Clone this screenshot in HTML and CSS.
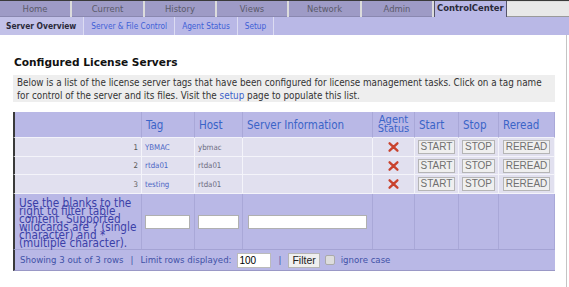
FILE: index.html
```html
<!DOCTYPE html>
<html>
<head>
<meta charset="utf-8">
<link rel="stylesheet" href="styles.css">
</head>
<body>
<div class="tabs">
  <div class="tab">Home</div>
  <div class="tab wide">Current</div>
  <div class="tab">History</div>
  <div class="tab">Views</div>
  <div class="tab wide">Network</div>
  <div class="tab">Admin</div>
  <div class="tab active">ControlCenter</div>
  <div class="tab-rest"></div>
</div>
<div class="subnav">
  <span class="sub current">Server Overview</span>
  <a class="sub">Server &amp; File Control</a>
  <a class="sub">Agent Status</a>
  <a class="sub">Setup</a>
</div>
<div class="main">
  <h1 class="title">Configured License Servers</h1>
  <div class="intro">Below is a list of the license server tags that have been configured for license management tasks. Click on a tag name for control of the server and its files. Visit the <a class="link">setup</a> page to populate this list.</div>
  <table class="grid">
    <thead>
      <tr class="head">
        <th class="c-num"></th>
        <th class="c-tag">Tag</th>
        <th class="c-host">Host</th>
        <th class="c-info">Server Information</th>
        <th class="c-agent"><span class="agent">Agent<br>Status</span></th>
        <th class="c-start">Start</th>
        <th class="c-stop">Stop</th>
        <th class="c-reread">Reread</th>
      </tr>
    </thead>
    <tbody>
      <tr class="row">
        <td class="num">1</td><td><a class="tag">YBMAC</a></td><td class="host">ybmac</td><td></td>
        <td class="ctr"><svg class="x" width="11" height="10" viewBox="0 0 11 10"><path d="M1.6 1.3 L9.4 8.7 M9.4 1.3 L1.6 8.7" stroke="#c9432e" stroke-width="2.3" stroke-linecap="round"/></svg></td>
        <td class="ctr"><button class="btn">START</button></td><td class="ctr"><button class="btn">STOP</button></td><td class="ctr"><button class="btn">REREAD</button></td>
      </tr>
      <tr class="row">
        <td class="num">2</td><td><a class="tag">rtda01</a></td><td class="host">rtda01</td><td></td>
        <td class="ctr"><svg class="x" width="11" height="10" viewBox="0 0 11 10"><path d="M1.6 1.3 L9.4 8.7 M9.4 1.3 L1.6 8.7" stroke="#c9432e" stroke-width="2.3" stroke-linecap="round"/></svg></td>
        <td class="ctr"><button class="btn">START</button></td><td class="ctr"><button class="btn">STOP</button></td><td class="ctr"><button class="btn">REREAD</button></td>
      </tr>
      <tr class="row">
        <td class="num">3</td><td><a class="tag">testing</a></td><td class="host">rtda01</td><td></td>
        <td class="ctr"><svg class="x" width="11" height="10" viewBox="0 0 11 10"><path d="M1.6 1.3 L9.4 8.7 M9.4 1.3 L1.6 8.7" stroke="#c9432e" stroke-width="2.3" stroke-linecap="round"/></svg></td>
        <td class="ctr"><button class="btn">START</button></td><td class="ctr"><button class="btn">STOP</button></td><td class="ctr"><button class="btn">REREAD</button></td>
      </tr>
      <tr class="filter">
        <td class="hint">Use the blanks to the right to filter table content. Supported wildcards are ? (single character) and * (multiple character).</td>
        <td><input class="fin fin-tag" type="text"></td>
        <td><input class="fin fin-host" type="text"></td>
        <td><input class="fin fin-info" type="text"></td>
        <td></td><td></td><td></td><td></td>
      </tr>
      <tr class="foot">
        <td colspan="8">
          <div class="footbar">
            <span>Showing 3 out of 3 rows</span>
            <span class="pipe">|</span>
            <span>Limit rows displayed:</span>
            <input class="limit" type="text" value="100">
            <span class="pipe">|</span>
            <button class="btn fbtn">Filter</button>
            <span class="chk"></span>
            <span>ignore case</span>
          </div>
        </td>
      </tr>
    </tbody>
  </table>
</div>
</body>
</html>
```

FILE: styles.css
```css
html, body {
  margin: 0;
  padding: 0;
  background: #ffffff;
  font-family: "DejaVu Sans Condensed", "DejaVu Sans", sans-serif;
}
.tabs {
  display: flex;
  height: 17px;
  border-top: 1px solid #3a3a3a;
  box-sizing: border-box;
  background: #dcdcdc;
}
.tab {
  width: 70px;
  margin-right: 2px;
  background: #9e9bc6;
  color: #5a5a6a;
  font-size: 9.4px;
  text-align: center;
  line-height: 15px;
  border-bottom: 1px solid #8a88b0;
  box-sizing: border-box;
}
.tab.wide { width: 71px; }
.tab.active {
  width: 73px;
  margin-right: 0;
  background: #b9b8e6;
  color: #2a2a3a;
  font-weight: bold;
  border-bottom: none;
  border-left: 1px solid #55546a;
  border-right: 1px solid #55546a;
  text-align: left;
  padding-left: 2px;
  line-height: 13px;
}
.tab-rest {
  flex: 1;
  background: #e8e8e8;
  border-bottom: 1px solid #9a9a9a;
  margin-top: 1px;
}
.subnav {
  display: flex;
  height: 18px;
  background: #b9b8e6;
  font-size: 8.2px;
  line-height: 18px;
}
.sub {
  padding: 0 7px;
  border-right: 1px solid #dcdcf2;
  color: #3d5fd6;
}
.sub.current {
  color: #2a2a3a;
  font-weight: bold;
  background: #c2c1e8;
  padding: 0 7px 0 6px;
  font-size: 8.4px;
}
.main {
  width: 567px;
  border-right: 1px solid #c4c4c4;
  min-height: 252px;
  box-sizing: border-box;
  padding: 20px 0 0 13px;
}
.title {
  margin: 0 0 6px 1px;
  font-family: "DejaVu Sans", sans-serif;
  font-size: 10.6px;
  font-weight: bold;
  color: #111;
  line-height: 14px;
}
.intro {
  width: 542px;
  box-sizing: border-box;
  background: #eeeeee;
  font-size: 9.8px;
  line-height: 13px;
  color: #333;
  padding: 1px 4px 0 4px;
  height: 27px;
  margin-bottom: 10px;
}
.link { color: #3c5fc9; }
.grid {
  width: 542px;
  border-collapse: separate;
  border-spacing: 0;
  table-layout: fixed;
}
.grid th, .grid td { box-sizing: border-box; }
.c-num { width: 129px; }
.c-tag { width: 53px; }
.c-host { width: 48px; }
.c-info { width: 130px; }
.c-agent { width: 42px; }
.c-start { width: 44px; }
.c-stop { width: 40px; }
.c-reread { width: 56px; }
.grid tr > :first-child { border-left: 2px solid #3a3a3a; }
.head th {
  background: #b9b8e6;
  color: #3a64c8;
  font-weight: normal;
  font-size: 11.5px;
  text-align: left;
  height: 26px;
  padding: 0 4px;
  border-right: 1px solid #a9a8d8;
  border-bottom: 1px solid #f2f2fa;
}
.head th.c-agent {
  text-align: center;
  padding: 0;
}
.agent {
  display: inline-block;
  font-size: 11px;
  line-height: 9px;
  padding-top: 1px;
}
.row td {
  background: #e1e0ef;
  height: 19px;
  border-right: 1px solid #f4f4fa;
  border-bottom: 1px solid #f4f4fa;
  font-size: 7.8px;
  padding: 0 3px;
  color: #6b6b80;
}
.row:nth-child(2) td { height: 18px; }
.row td.num { text-align: right; color: #555; padding-right: 3px; }
.tag { color: #4a64c4; }
.host { color: #6b6b80; }
.ctr { text-align: center; padding: 0 !important; }
.x { display: block; margin: 0 auto; }
.btn {
  font-family: "Liberation Sans", Arial, sans-serif;
  font-size: 10px;
  color: #707070;
  background: #efefef;
  border: 1px solid #b5b5b5;
  padding: 0 2px;
  height: 14px;
  line-height: 12px;
  margin: 0;
}
.filter td {
  background: #b9b8e6;
  border-right: 1px solid #a9a8d8;
  height: 55px;
  padding: 0 3px;
}
.filter td.hint {
  font-size: 11.7px;
  line-height: 8px;
  color: #3b3fa8;
  padding: 5px 2px 0 4px;
  vertical-align: top;
}
.fin {
  display: block;
  height: 14px;
  box-sizing: border-box;
  border: 1px solid #b0b0b0;
  background: #fff;
  padding: 0;
  margin: 0;
}
.fin-tag { width: 45px; margin-left: 0; }
.fin-host { width: 41px; margin-left: 0; }
.fin-info { width: 119px; margin-left: 2px; }
.foot td {
  background: #b9b8e6;
  border-top: 1px solid #a4a3d4;
  border-bottom: 1px solid #9a98c6;
  height: 22px;
  padding: 0 0 0 5px;
}
.footbar {
  display: flex;
  align-items: center;
  font-family: "DejaVu Sans", sans-serif;
  font-size: 8.6px;
  color: #4152a6;
  gap: 5px;
}
.pipe { margin: 0 2px; }
.limit {
  width: 34px;
  height: 15px;
  box-sizing: border-box;
  border: 1px solid #bbb;
  font-family: "Liberation Sans", Arial, sans-serif;
  font-size: 10px;
  padding: 0 1px;
  margin-left: 1px;
}
.fbtn {
  height: 15px;
  color: #222;
  font-size: 10.5px;
  padding: 0 3px;
  margin-left: 0;
}
.chk {
  width: 8px;
  height: 8px;
  border: 1px solid #aaa;
  background: #ddd;
  border-radius: 2px;
  margin-left: 0;
  margin-right: 1px;
}
```
